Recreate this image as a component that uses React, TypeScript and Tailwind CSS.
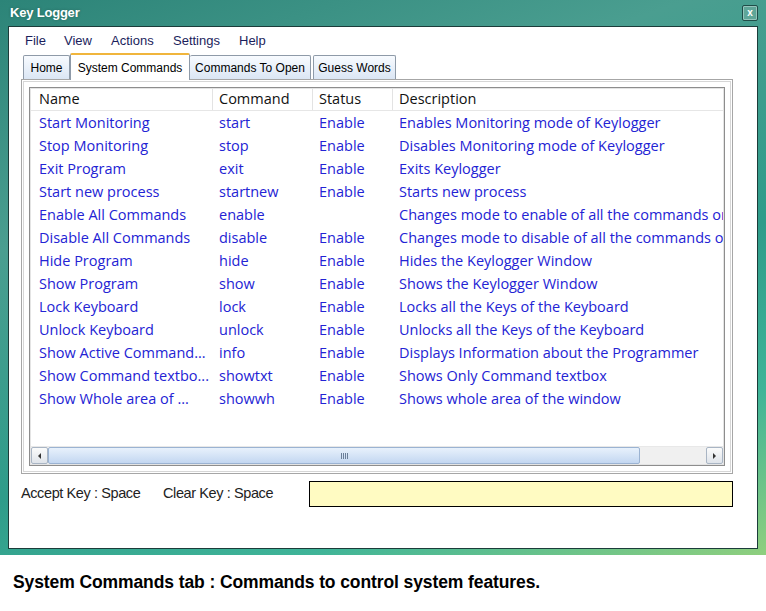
import React from "react";

const rows: [string, string, string, string][] = [
  ["Start Monitoring", "start", "Enable", "Enables Monitoring mode of Keylogger"],
  ["Stop Monitoring", "stop", "Enable", "Disables Monitoring mode of Keylogger"],
  ["Exit Program", "exit", "Enable", "Exits Keylogger"],
  ["Start new process", "startnew", "Enable", "Starts new process"],
  ["Enable All Commands", "enable", "", "Changes mode to enable of all the commands on"],
  ["Disable All Commands", "disable", "Enable", "Changes mode to disable of all the commands on"],
  ["Hide Program", "hide", "Enable", "Hides the Keylogger Window"],
  ["Show Program", "show", "Enable", "Shows the Keylogger Window"],
  ["Lock Keyboard", "lock", "Enable", "Locks all the Keys of the Keyboard"],
  ["Unlock Keyboard", "unlock", "Enable", "Unlocks all the Keys of the Keyboard"],
  ["Show Active Command...", "info", "Enable", "Displays Information about the Programmer"],
  ["Show Command textbo...", "showtxt", "Enable", "Shows Only Command textbox"],
  ["Show Whole area of ...", "showwh", "Enable", "Shows whole area of the window"],
];

export default function App() {
  return (
    <div className="w-[766px] h-[611px] bg-white overflow-hidden font-['Liberation_Sans',sans-serif]">
      {/* Window */}
      <div className="h-[555px] flex flex-col px-[8px] pb-[6px] bg-[linear-gradient(160deg,#2c8478_0%,#4a9e90_30%,#2f9c8a_60%,#3fb498_80%,#8fcf7e_100%)]">
        {/* Title bar */}
        <div className="h-[26px] flex items-center justify-between pl-[2px]">
          <span className="text-white text-[13px] font-bold tracking-[-0.2px] [text-shadow:0_0_3px_rgba(0,0,0,0.25)]">Key Logger</span>
          <div className="w-[16px] h-[16px] border border-[#1f4d48] bg-[#5fa698] flex items-center justify-center rounded-[2px] shadow-[inset_0_0_0_1px_rgba(255,255,255,0.35)]">
            <span className="text-white text-[10px] font-bold leading-none -mt-[1px]">x</span>
          </div>
        </div>
        {/* Client area */}
        <div className="flex-1 bg-white border border-[#1c3c3a] flex flex-col pl-[12px] pr-[24px]">
          {/* Menu */}
          <div className="flex items-center h-[24px] mt-[2px] pl-[4px] text-[13px] text-[#1b1e5c]">
            <span className="w-[39px]">File</span>
            <span className="w-[47px]">View</span>
            <span className="w-[62px]">Actions</span>
            <span className="w-[66px]">Settings</span>
            <span>Help</span>
          </div>
          {/* Tabs */}
          <div className="flex items-end h-[26px] pl-[2px] text-[12px] text-black">
            <div className="h-[24px] w-[47px] flex items-center justify-center border border-[#8e9aa8] border-b-0 bg-[linear-gradient(#f8fbff,#dbe6f4)] rounded-t-[2px]">Home</div>
            <div className="h-[27px] w-[120px] flex items-center justify-center bg-white border border-[#8e9aa8] border-b-0 border-t-2 border-t-[#f0b53c] rounded-t-[2px] relative top-[1px] z-10">System Commands</div>
            <div className="h-[24px] w-[121px] flex items-center justify-center border border-[#8e9aa8] border-b-0 border-l-0 bg-[linear-gradient(#f8fbff,#dbe6f4)] rounded-t-[2px]">Commands To Open</div>
            <div className="h-[24px] w-[83px] flex items-center justify-center border border-[#8e9aa8] border-b-0 ml-[2px] bg-[linear-gradient(#f8fbff,#dbe6f4)] rounded-t-[2px]">Guess Words</div>
          </div>
          {/* Tab panel */}
          <div className="h-[395px] border border-[#a6a6a6] shadow-[inset_0_0_0_1px_#ffffff,inset_0_0_0_2px_#d6d6d6] p-[7px]">
            <div className="h-full border border-[#8d8d8d] shadow-[inset_0_0_0_1px_#e4e4e4] flex flex-col font-['Open_Sans',sans-serif] text-[14.5px]">
              {/* Header */}
              <div className="h-[23px] flex items-center text-[#111] border-b border-[#e6e6e6] mx-[1px]">
                <div className="w-[182px] pl-[8px] border-r border-[#e3e3e3] h-full flex items-center">Name</div>
                <div className="w-[100px] pl-[6px] border-r border-[#e3e3e3] h-full flex items-center">Command</div>
                <div className="w-[80px] pl-[6px] border-r border-[#e3e3e3] h-full flex items-center">Status</div>
                <div className="flex-1 pl-[6px] h-full flex items-center">Description</div>
              </div>
              {/* Rows */}
              <div className="flex-1 overflow-hidden mx-[1px]">
                {rows.map((r, i) => (
                  <div key={i} className="h-[23px] flex items-center text-[#2323d4] whitespace-nowrap">
                    <div className="w-[182px] shrink-0 pl-[8px] overflow-hidden">{r[0]}</div>
                    <div className="w-[100px] shrink-0 pl-[6px]">{r[1]}</div>
                    <div className="w-[80px] shrink-0 pl-[6px]">{r[2]}</div>
                    <div className="flex-1 min-w-0 pl-[6px] overflow-hidden">{r[3]}</div>
                  </div>
                ))}
              </div>
              {/* Horizontal scrollbar */}
              <div className="h-[18px] flex mx-[1px] mb-[1px] bg-[#f0f0f0] border-t border-[#e8e8e8]">
                <div className="w-[17px] border border-[#a9b5c4] bg-[linear-gradient(#fbfbfb,#dfe4ea)] flex items-center justify-center rounded-[2px]">
                  <div className="w-0 h-0 border-y-[3px] border-y-transparent border-r-[3px] border-r-[#333]" />
                </div>
                <div className="w-[592px] border border-[#9bb3d2] bg-[linear-gradient(#e8f1fc,#c3d7f1)] flex items-center justify-center rounded-[2px]">
                  <div className="flex gap-[1px]">
                    <div className="w-[1px] h-[6px] bg-[#6b7f99]" />
                    <div className="w-[1px] h-[6px] bg-[#6b7f99]" />
                    <div className="w-[1px] h-[6px] bg-[#6b7f99]" />
                    <div className="w-[1px] h-[6px] bg-[#6b7f99]" />
                  </div>
                </div>
                <div className="flex-1" />
                <div className="w-[17px] border border-[#a9b5c4] bg-[linear-gradient(#fbfbfb,#dfe4ea)] flex items-center justify-center rounded-[2px]">
                  <div className="w-0 h-0 border-y-[3px] border-y-transparent border-l-[3px] border-l-[#333]" />
                </div>
              </div>
            </div>
          </div>
          {/* Bottom row */}
          <div className="flex items-center mt-[7px] h-[26px] text-[14.5px] text-[#222]">
            <span className="w-[142px] tracking-[-0.4px]">Accept Key : Space</span>
            <span className="w-[146px] tracking-[-0.4px]">Clear Key : Space</span>
            <div className="flex-1 h-[26px] bg-[#fffbc2] border border-black" />
          </div>
        </div>
      </div>
      {/* Caption */}
      <div className="pl-[13px] pt-[14px] text-[17.5px] font-bold text-black tracking-[-0.1px]">
        System Commands tab : Commands to control system features.
      </div>
    </div>
  );
}
